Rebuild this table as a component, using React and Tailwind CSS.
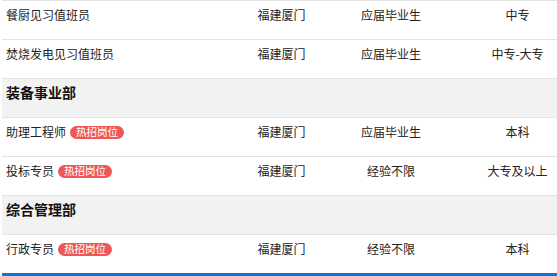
const rows = [
  { type: "job", name: "餐厨见习值班员", place: "福建厦门", exp: "应届毕业生", edu: "中专" },
  { type: "job", name: "焚烧发电见习值班员", place: "福建厦门", exp: "应届毕业生", edu: "中专-大专" },
  { type: "dept", name: "装备事业部" },
  { type: "job", name: "助理工程师", hot: true, place: "福建厦门", exp: "应届毕业生", edu: "本科" },
  { type: "job", name: "投标专员", hot: true, place: "福建厦门", exp: "经验不限", edu: "大专及以上" },
  { type: "dept", name: "综合管理部" },
  { type: "job", name: "行政专员", hot: true, place: "福建厦门", exp: "经验不限", edu: "本科" },
];

function HotTag() {
  return (
    <span className="ml-[4px] inline-flex h-[13px] items-center rounded-full bg-[#ef5757] px-[6px] text-[10.5px] leading-none text-white">
      热招岗位
    </span>
  );
}

export default function App() {
  return (
    <div
      className="w-[557px] h-[276px] overflow-hidden bg-white"
      style={{ fontFamily: '"Microsoft YaHei", "Noto Sans CJK SC", sans-serif' }}
    >
      <div className="ml-[2px] w-[588px]">
        {rows.map((r, i) =>
          r.type === "dept" ? (
            <div
              key={i}
              className="h-[39px] border-t border-[#e4e4e4] bg-[#f2f2f2] pl-[4px] pt-[4px] text-[14px] font-bold leading-[18px] text-[#111]"
            >
              {r.name}
            </div>
          ) : (
            <div
              key={i}
              className="grid h-[39px] grid-cols-[224px_111px_108px_145px] items-start border-t border-[#e4e4e4] pt-[6px] text-[12px] leading-[16px] text-[#222]"
            >
              <div className="flex h-[16px] items-center pl-[4px]">
                <span>{r.name}</span>
                {r.hot && <HotTag />}
              </div>
              <div className="text-center">{r.place}</div>
              <div className="text-center">{r.exp}</div>
              <div className="text-center">{r.edu}</div>
            </div>
          )
        )}
        <div className="h-[4px] bg-[#0b78d0]" />
      </div>
    </div>
  );
}
